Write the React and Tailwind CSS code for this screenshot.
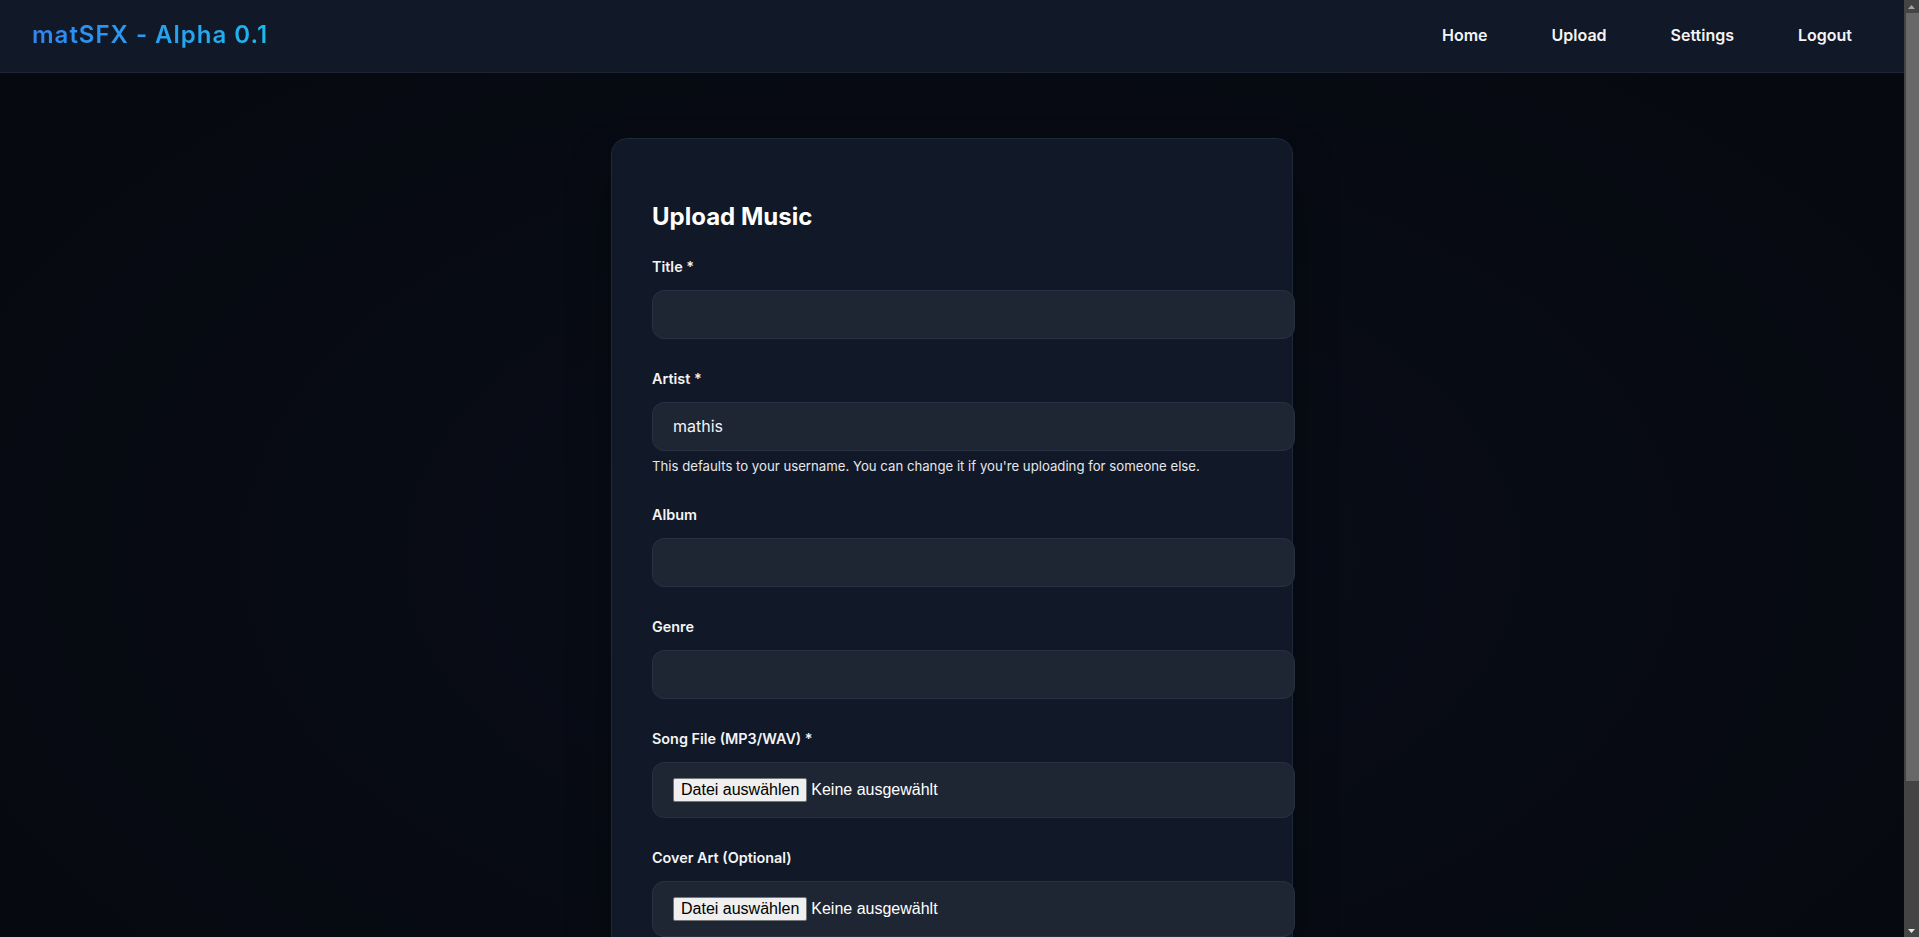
import React, { useState } from "react";

const NAV = ["Home", "Upload", "Settings", "Logout"];

const inputCls =
  "block w-[643px] rounded-xl border border-[#283142] bg-[#1f2633] px-5 py-3.5 text-base leading-[19px] text-gray-100 outline-none";

const Field = ({ label, children, help }) => (
  <div className="mb-[30px]">
    <label className="mb-[13px] block text-[14.4px] font-semibold leading-5 text-gray-100">
      {label}
    </label>
    {children}
    {help && (
      <p className="mt-[6px] text-[13.2px] leading-[18px] text-gray-200">{help}</p>
    )}
  </div>
);

const FilePicker = () => (
  <div className="flex h-[56px] w-[643px] items-center rounded-xl border border-[#283142] bg-[#1f2633] px-5 font-['Liberation_Sans',Arial,sans-serif] text-base">
    <button
      type="button"
      className="h-6 rounded-[2px] border border-[#767676] bg-[#efefef] px-[7px] leading-none text-black"
    >
      Datei auswählen
    </button>
    <span className="ml-1 text-white">Keine ausgewählt</span>
  </div>
);

// the browser's own scrollbar is hidden in the screenshot run, so draw it
const Scrollbar = () => (
  <aside className="sticky top-0 flex h-screen w-[15px] shrink-0 flex-col items-center bg-[#444444]">
    <div className="flex h-[13px] w-full items-center justify-center">
      <svg width="7" height="4" viewBox="0 0 7 4">
        <path d="M0 4 L3.5 0 L7 4 Z" fill="#a3a3a3" />
      </svg>
    </div>
    <div className="ml-[1px] h-[768px] w-[13px] bg-[#686868]" />
    <div className="flex-1" />
    <div className="flex h-[13px] w-full items-center justify-center">
      <svg width="7" height="4" viewBox="0 0 7 4">
        <path d="M0 0 L7 0 L3.5 4 Z" fill="#e5e5e5" />
      </svg>
    </div>
  </aside>
);

const App = () => {
  const [title, setTitle] = useState("");
  const [artist, setArtist] = useState("mathis");
  const [album, setAlbum] = useState("");
  const [genre, setGenre] = useState("");

  return (
    <div className="flex min-h-screen items-start bg-[radial-gradient(ellipse_at_center,#0a0e19_0%,#060910_80%)] font-['Inter',sans-serif] text-gray-100">
      <div className="min-w-0 flex-1">
        <header className="flex h-[73px] items-center justify-between border-b border-[#1d2432] bg-[#111827] px-8 pb-0.5">
          <h1 className="bg-gradient-to-r from-[#3086f2] to-[#1cb8ee] bg-clip-text text-2xl font-semibold tracking-[1px] text-transparent">
            matSFX - Alpha 0.1
          </h1>
          <nav className="flex gap-6">
            {NAV.map((item) => (
              <a
                key={item}
                href="#"
                className="px-5 text-base font-semibold text-gray-100"
              >
                {item}
              </a>
            ))}
          </nav>
        </header>

        <main className="pt-[65px] pb-14">
          <div className="mx-auto w-[682px] rounded-2xl border border-[#1f2937] bg-[#111827] px-10 pt-[62px] pb-10 shadow-2xl shadow-black/60">
            <h2 className="mb-6 text-2xl font-bold leading-8 text-white">Upload Music</h2>

            <Field label="Title *">
              <input className={inputCls} value={title} onChange={(e) => setTitle(e.target.value)} />
            </Field>

            <Field
              label="Artist *"
              help="This defaults to your username. You can change it if you're uploading for someone else."
            >
              <input className={inputCls} value={artist} onChange={(e) => setArtist(e.target.value)} />
            </Field>

            <Field label="Album">
              <input className={inputCls} value={album} onChange={(e) => setAlbum(e.target.value)} />
            </Field>

            <Field label="Genre">
              <input className={inputCls} value={genre} onChange={(e) => setGenre(e.target.value)} />
            </Field>

            <Field label="Song File (MP3/WAV) *">
              <FilePicker />
            </Field>

            <Field label="Cover Art (Optional)">
              <FilePicker />
            </Field>

            <button
              type="button"
              className="w-[643px] rounded-xl bg-gradient-to-r from-blue-600 to-sky-500 py-3 text-base font-semibold text-white"
            >
              Upload
            </button>
          </div>
        </main>
      </div>
      <Scrollbar />
    </div>
  );
};

export default App;
